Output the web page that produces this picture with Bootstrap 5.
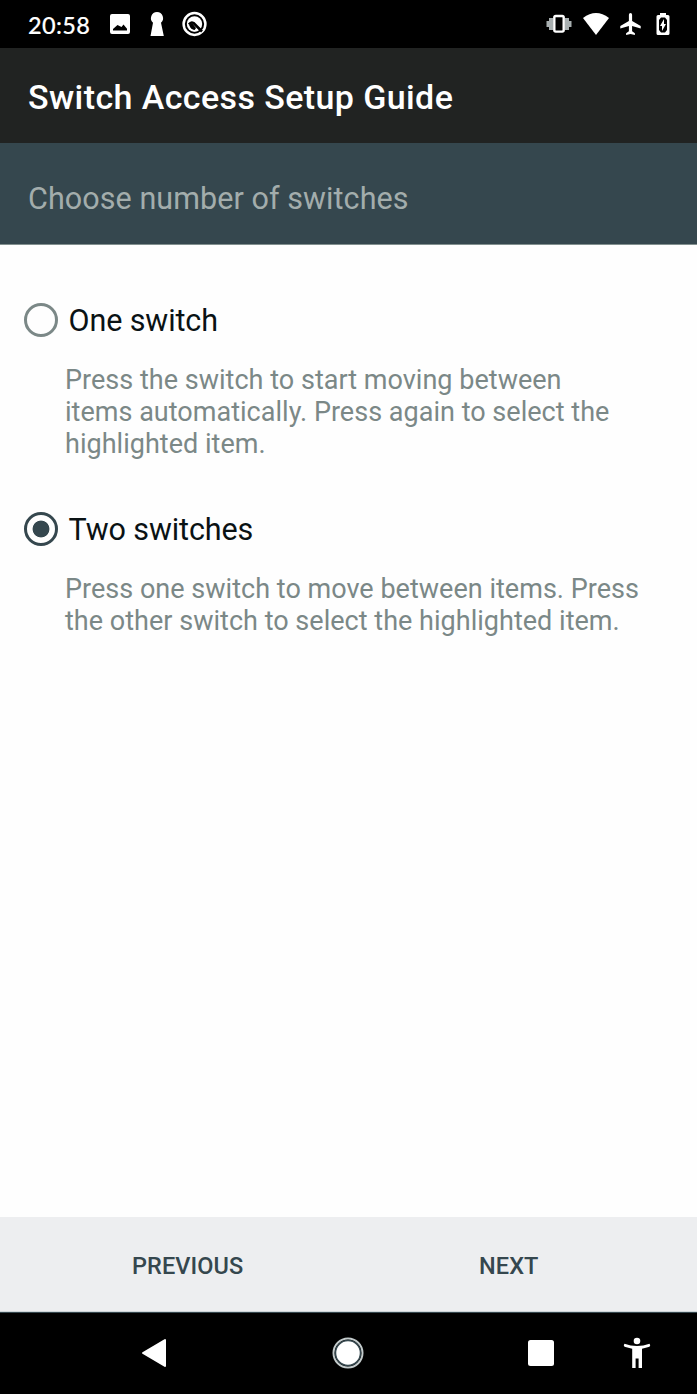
<!DOCTYPE html>
<html lang="en">
<head>
<meta charset="utf-8">
<meta name="viewport" content="width=device-width, initial-scale=1">
<title>Switch Access Setup Guide</title>
<link rel="stylesheet" href="https://cdn.jsdelivr.net/npm/bootstrap@5.3.0/dist/css/bootstrap.min.css">
<style>
body{font-family:Roboto,sans-serif;background:#fefefe;color:#0a1214}
svg{display:block;flex:none}
.status-bar{height:48px;background:#000;color:#fff;padding:0 26px 0 28px}
.clock{font:500 23.5px/48px Lato,sans-serif;width:82px;letter-spacing:.35px;padding-top:2px;-webkit-text-stroke:.15px #fff}
.app-bar{height:95px;background:#212322;color:#fff;padding-left:28px}
.app-bar h1{font-size:34px;font-weight:500;letter-spacing:.4px;line-height:40px;padding-top:2px}
.step-bar{height:102px;background:#35474e;border-bottom:1px solid #82908f;color:#a3adac;padding-left:28px}
.step-bar h2{font-size:30.5px;font-weight:400;letter-spacing:.07px;line-height:36px;padding-top:10px}
.choices{padding:55px 24px 0}
.choice{margin-bottom:49px}
.choice-title{font-size:30.5px;line-height:40px;letter-spacing:-.1px;height:40px}
.choice-title span{margin-left:10.5px;padding-top:1px}
.form-check-input.switch-radio{width:34px;height:34px;border:3px solid #7b8887;background:#fefefe;box-shadow:none;flex:none}
.form-check-input.switch-radio:checked{border-color:#35474e;background:radial-gradient(circle,#35474e 0 8px,#fefefe 8.8px)}
.choice p{font-size:27px;line-height:32px;letter-spacing:.02px;color:#7b8887;margin:24px 0 0 41px;white-space:nowrap}
.actions{height:95px;background:#edeef0;border-bottom:1px solid #cdd5d8}
.actions .btn{font-size:23.5px;font-weight:500;line-height:30px;color:#35474e;border:0;padding:4px 0 0;letter-spacing:.08px}
.nav-keys{height:82px;background:#000;border-top:1px solid #35474e;padding-bottom:2px}
</style>
</head>
<body class="d-flex flex-column vh-100 overflow-hidden">
<header>
  <div class="status-bar d-flex align-items-center">
    <span class="clock">20:58</span>
    <svg width="20" height="20" viewBox="0 0 20 20"><path fill="#fff" fill-rule="evenodd" d="M2 0h16q2 0 2 2v16q0 2-2 2H2q-2 0-2-2V2Q0 0 2 0ZM3 16.5h14v-1.800L13.500 10.500 11.500 13 7.500 11 3 15Z"/></svg>
    <svg class="ms-3" width="24" height="26" viewBox="0 0 24 26"><path fill="#fff" d="M11 1a6.200 6.200 0 0 1 4 10.800L17.800 25H4.500L7 11.800A6.200 6.200 0 0 1 11 1Z"/></svg>
    <svg style="margin-left:11px" width="26" height="26" viewBox="0 0 26 26" fill="none"><circle cx="13.500" cy="13" r="10.900" stroke="#fff" stroke-width="2.500"/><circle cx="13.500" cy="13" r="7.700" fill="#fff"/><path stroke="#000" stroke-width="2.600" stroke-linejoin="round" d="M8 13.500q2-3 4.500-1.500L21 20.500"/><path fill="#000" d="M8 14l3-2 4 5-1.500 2.500Q9 18.500 8 14Z"/><path stroke="#fff" stroke-width="1.600" d="M7.300 14.500q1.500 4.500 6 5.200l2.500-.5"/></svg>
    <div class="ms-auto d-flex align-items-center">
      <svg width="26" height="22" viewBox="0 0 26 22"><path fill="#a8afb0" d="M.5 8H3V5h4v12H3v-3H.5ZM25.500 8H23V5h-4v12h4v-3h2.500Z"/><rect x="8.300" y="3" width="9.400" height="15.600" rx="1.500" fill="#000" stroke="#fff" stroke-width="2.400"/></svg>
      <svg style="margin-left:11px" width="26" height="24" viewBox="0 0 26 24"><path fill="#fff" d="M0 6Q13-4 26 6L13 23Z"/></svg>
      <svg style="margin-left:11px" width="21" height="24" viewBox="0 0 21 24"><path fill="#fff" d="M10.500 1q1.600 0 1.600 1.800v6.300l8.600 5v2.400l-8.600-2.600v5.300l2.800 2V23l-4.400-1.100L6.100 23v-1.800l2.800-2v-5.300L.3 16.500v-2.400l8.600-5V2.800Q8.900 1 10.500 1Z"/></svg>
      <svg style="margin-left:14px" width="16" height="24" viewBox="0 0 16 24"><path fill="#fff" fill-rule="evenodd" d="M5 1h6v2h2q1.500 0 1.500 1.500v17Q14.500 23 13 23H3Q1.500 23 1.500 21.500v-17Q1.500 3 3 3h2ZM6 5.500 4 8v10l2 2.500h4l2-2.500V8l-2-2.500Z"/><path fill="#fff" d="M9 7v5H11L7 19v-5H5Z"/></svg>
    </div>
  </div>
  <div class="app-bar d-flex align-items-center"><h1 class="m-0">Switch Access Setup Guide</h1></div>
  <div class="step-bar d-flex align-items-center"><h2 class="m-0">Choose number of switches</h2></div>
</header>
<main class="choices flex-grow-1">
  <div class="choice">
    <label class="choice-title d-flex align-items-center"><input class="form-check-input switch-radio m-0" type="radio" name="switches"><span>One switch</span></label>
    <p>Press the switch to start moving between<br>items automatically. Press again to select the<br>highlighted item.</p>
  </div>
  <div class="choice">
    <label class="choice-title d-flex align-items-center"><input class="form-check-input switch-radio m-0" type="radio" name="switches" checked><span>Two switches</span></label>
    <p>Press one switch to move between items. Press<br>the other switch to select the highlighted item.</p>
  </div>
</main>
<footer>
  <div class="actions d-flex align-items-center">
    <button class="btn" style="margin-left:132px" type="button">PREVIOUS</button>
    <button class="btn ms-auto" style="margin-right:158.5px" type="button">NEXT</button>
  </div>
  <nav class="nav-keys d-flex align-items-center">
    <svg style="margin-left:141px" width="26" height="30" viewBox="0 0 26 30"><path fill="#fff" stroke="#fff" stroke-width="2" stroke-linejoin="round" d="M2 15 24 2v26Z"/></svg>
    <svg style="margin-left:165px" width="32" height="32" viewBox="0 0 32 32"><circle cx="16" cy="16" r="14.500" fill="none" stroke="#c3cbcc" stroke-width="2"/><circle cx="16" cy="16" r="12.500" fill="#fff" stroke="#35474e" stroke-width="1.500"/></svg>
    <svg style="margin-left:164px" width="26" height="26" viewBox="0 0 26 26"><rect width="26" height="26" rx="2.500" fill="#fff"/></svg>
    <svg style="margin-left:69px" width="28" height="32" viewBox="0 0 28 32"><circle cx="14" cy="4" r="3.300" fill="#fff"/><path fill="#fff" d="M1.500 6.800Q14 11.200 26.500 6.800q1.500 1.600 0 3L19 11.800V31h-3.400v-9.500h-3V31H9.200V11.800L1.500 9.800q-1.500-1.400 0-3Z"/></svg>
  </nav>
</footer>
<script src="https://cdn.jsdelivr.net/npm/bootstrap@5.3.0/dist/js/bootstrap.bundle.min.js"></script>
</body>
</html>
